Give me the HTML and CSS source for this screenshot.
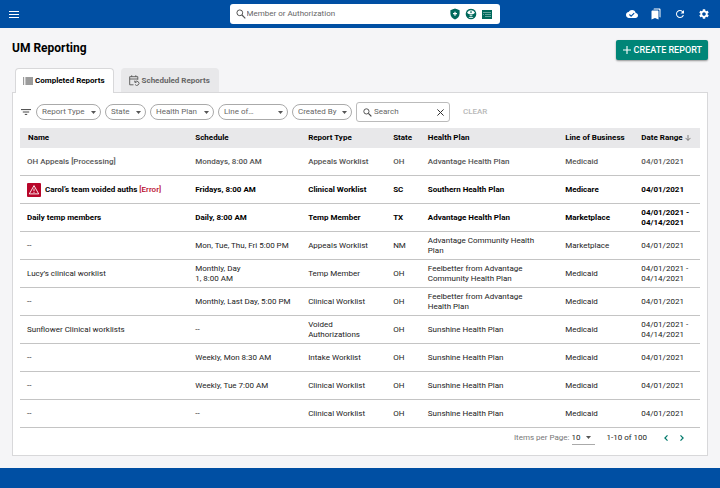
FILE: index.html
```html
<!DOCTYPE html>
<html lang="en">
<head>
<meta charset="utf-8">
<meta name="viewport" content="width=device-width, initial-scale=1">
<title>UM Reporting</title>
<link rel="stylesheet" href="styles.css">
</head>
<body>
<header class="topbar">
  <button class="icon-btn" type="button" aria-label="Menu">
    <svg width="10" height="8" viewBox="0 0 10 8"><path d="M0 1.500h10M0 4.500h10M0 7.500h10" stroke="#fff"/></svg>
  </button>
  <form class="global-search" role="search">
    <svg width="10" height="10" viewBox="0 0 10 10" fill="none" stroke="#555"><circle cx="3.8" cy="3.8" r="2.9"/><path d="M6 6l3.3 3.3" stroke-width="1.2"/></svg>
    <input type="search" aria-label="Member or Authorization" placeholder="Member or Authorization">
    <button class="icon-btn" type="button" aria-label="Coverage">
      <svg width="10" height="12" viewBox="0 0 10 12"><path d="M5 .4l4.6 1.8v3.4c0 2.8-1.9 5-4.6 6C2.300 10.600.4 8.400.4 5.600V2.200z" fill="#00695c"/><path d="M5 3.700v4M3 5.700h4" stroke="#fff" stroke-width="1.2"/></svg>
    </button>
    <button class="icon-btn" type="button" aria-label="Provider">
      <svg width="12" height="12" viewBox="0 0 12 12"><circle cx="6" cy="6" r="5.300" fill="#00695c"/><path d="M2 4.700Q3.500 2.300 6 2.300t4 2.400L8.400 6H3.600z" fill="#fff"/><path d="M4.300 6.400a1.700 1.700 0 0 0 3.400 0zM3.600 9.900c.3-.9 1.200-1.200 2.400-1.200s2.100.3 2.400 1.200z" fill="#cfe5e2"/><path d="M6 3.100v2M5 4.100h2" stroke="#00695c" stroke-width=".7"/></svg>
    </button>
    <button class="icon-btn" type="button" aria-label="Member card">
      <svg width="10" height="9" viewBox="0 0 10 9"><path d="M0 0h10v9H0z" fill="#00695c"/><path d="M1 2.500h8M1 4.500h1M3 4.500h6M3 6.500h6" stroke="#7db5ad" stroke-width=".8"/></svg>
    </button>
  </form>
  <nav class="tools" aria-label="Tools">
    <button class="icon-btn" type="button" aria-label="Sync status">
      <svg width="12" height="8" viewBox="0 0 24 16"><path d="M19.350 6.040A7.490 7.490 0 0 0 12 0C9.110 0 6.600 1.640 5.350 4.040A5.994 5.994 0 0 0 0 10c0 3.310 2.690 6 6 6h13c2.760 0 5-2.240 5-5 0-2.640-2.050-4.780-4.650-4.960z" fill="#fff"/><path d="M6.800 9l3.400 3.400 6.200-6.200" fill="none" stroke="#004fa3" stroke-width="2.200"/></svg>
    </button>
    <button class="icon-btn" type="button" aria-label="Bookmarks">
      <svg width="12" height="12" viewBox="0 0 24 24" fill="#fff"><path d="M19 18l2 1V3c0-1.100-.9-2-2-2H8.990C7.890 1 7 1.900 7 3h10c1.100 0 2 .9 2 2v13zM15 5H5c-1.100 0-2 .9-2 2v16l7-3 7 3V7c0-1.100-.9-2-2-2z"/></svg>
    </button>
    <button class="icon-btn" type="button" aria-label="Refresh">
      <svg width="12" height="12" viewBox="0 0 24 24" fill="#fff"><path d="M17.650 6.350A7.958 7.958 0 0 0 12 4c-4.420 0-7.990 3.580-7.990 8s3.570 8 7.990 8c3.730 0 6.840-2.550 7.730-6h-2.080A5.990 5.990 0 0 1 12 18c-3.310 0-6-2.690-6-6s2.690-6 6-6c1.660 0 3.140.69 4.220 1.780L13 11h7V4l-2.350 2.350z"/></svg>
    </button>
    <button class="icon-btn" type="button" aria-label="Settings">
      <svg width="12" height="12" viewBox="0 0 24 24" fill="#fff"><path d="M19.140 12.940c.04-.3.060-.61.060-.94 0-.32-.02-.64-.07-.94l2.030-1.580c.18-.14.23-.41.12-.61l-1.920-3.320c-.12-.22-.37-.29-.59-.22l-2.390.96c-.5-.38-1.030-.7-1.620-.94l-.36-2.540c-.04-.24-.24-.41-.48-.41h-3.840c-.24 0-.43.17-.47.41l-.36 2.540c-.59.24-1.130.57-1.620.94l-2.390-.96c-.22-.08-.47 0-.59.22L2.740 8.870c-.12.21-.08.47.12.61l2.030 1.580c-.05.3-.09.63-.09.94s.02.64.07.94l-2.030 1.580c-.18.14-.23.41-.12.61l1.920 3.320c.12.22.37.29.59.22l2.390-.96c.5.38 1.030.7 1.620.94l.36 2.540c.05.24.24.41.48.41h3.840c.24 0 .44-.17.47-.41l.36-2.540c.59-.24 1.130-.56 1.620-.94l2.390.96c.22.08.47 0 .59-.22l1.920-3.320c.12-.22.07-.47-.12-.61l-2.010-1.580zM12 15.600c-1.980 0-3.600-1.620-3.600-3.600s1.620-3.600 3.600-3.600 3.600 1.620 3.600 3.600-1.620 3.600-3.600 3.600z"/></svg>
    </button>
  </nav>
</header>

<main class="page">
  <div class="page-head">
    <h1>UM Reporting</h1>
    <button class="create" type="button">
      <svg width="8" height="8" viewBox="0 0 8 8"><path d="M4 0v8M0 4h8" stroke="#fff" stroke-width="1.100"/></svg>
      CREATE REPORT
    </button>
  </div>

  <div class="tabs" role="tablist">
    <button class="tab tab-active" type="button" role="tab" aria-selected="true">
      <svg width="10" height="8" viewBox="0 0 10 8" stroke="#222" stroke-width=".9"><path d="M0 1h1.200M0 3h1.200M0 5h1.200M0 7h1.200M2.400 1H10M2.400 3H10M2.400 5H10M2.400 7H10"/></svg>
      Completed Reports
    </button>
    <button class="tab" type="button" role="tab" aria-selected="false">
      <svg width="11" height="11" viewBox="0 0 11 11" fill="none" stroke="#555" stroke-width=".9"><path d="M4.500 9.800H.7V1.700h8.100v3M.7 4h8.100M2.700.3v1.500M6.800.3v1.500M6.200 7a2.100 2.100 0 1 1-.1 2.500M5.800 5.600v1.700h1.700"/></svg>
      Scheduled Reports
    </button>
  </div>

  <section class="panel">
    <form class="filters">
      <svg width="10" height="6" viewBox="0 0 10 6"><path d="M0 .6h10M1.800 3h6.400M3.800 5.400h2.400" stroke="#444"/></svg>
      <select class="pill pill-type" aria-label="Report Type"><option>Report Type</option></select>
      <select class="pill pill-state" aria-label="State"><option>State</option></select>
      <select class="pill pill-plan" aria-label="Health Plan"><option>Health Plan</option></select>
      <select class="pill pill-line" aria-label="Line of Business"><option>Line of…</option></select>
      <select class="pill pill-by" aria-label="Created By"><option>Created By</option></select>
      <div class="table-search">
        <svg width="9" height="9" viewBox="0 0 10 10" fill="none" stroke="#444"><circle cx="3.800" cy="3.800" r="2.900"/><path d="M6 6l3.300 3.300" stroke-width="1.300"/></svg>
        <input type="search" aria-label="Search" placeholder="Search">
        <button class="icon-btn" type="button" aria-label="Clear search">
          <svg width="7" height="7" viewBox="0 0 7 7"><path d="M.4.4l6.200 6.200M6.600.4L.4 6.600" stroke="#333"/></svg>
        </button>
      </div>
      <button class="clear" type="reset">CLEAR</button>
    </form>

    <table class="reports">
      <colgroup><col class="c-name"><col class="c-sched"><col class="c-type"><col class="c-state"><col class="c-plan"><col class="c-line"><col class="c-date"></colgroup>
      <thead>
        <tr><th>Name</th><th>Schedule</th><th>Report Type</th><th>State</th><th>Health Plan</th><th>Line of Business</th><th>Date Range <svg class="sort" width="6" height="6" viewBox="0 0 6 6"><path d="M3 0v5.300M.5 2.900L3 5.400l2.500-2.500" fill="none" stroke="#666" stroke-width=".8"/></svg></th></tr>
      </thead>
      <tbody>
        <tr class="processing"><td>OH Appeals [Processing]</td><td>Mondays, 8:00 AM</td><td>Appeals Worklist</td><td>OH</td><td>Advantage Health Plan</td><td>Medicaid</td><td>04/01/2021</td></tr>
        <tr class="unread"><td><span class="failed"><svg width="14" height="14" viewBox="0 0 14 14"><rect width="14" height="14" rx="1" fill="#b8062a"/><path d="M7 2.600l4.700 8.300H2.300z" fill="none" stroke="#fff" stroke-width=".9"/><path d="M7 5.500v2.700M7 8.900v1" stroke="#fff" stroke-width=".9"/></svg><span>Carol’s team voided auths <em>[Error]</em></span></span></td><td>Fridays, 8:00 AM</td><td>Clinical Worklist</td><td>SC</td><td>Southern Health Plan</td><td>Medicare</td><td>04/01/2021</td></tr>
        <tr class="unread"><td>Daily temp members</td><td>Daily, 8:00 AM</td><td>Temp Member</td><td>TX</td><td>Advantage Health Plan</td><td>Marketplace</td><td>04/01/2021 - 04/14/2021</td></tr>
        <tr><td>--</td><td>Mon, Tue, Thu, Fri 5:00 PM</td><td>Appeals Worklist</td><td>NM</td><td>Advantage Community Health Plan</td><td>Marketplace</td><td>04/01/2021</td></tr>
        <tr><td>Lucy’s clinical worklist</td><td>Monthly, Day<br>1, 8:00 AM</td><td>Temp Member</td><td>OH</td><td>Feelbetter from Advantage Community Health Plan</td><td>Medicaid</td><td>04/01/2021 - 04/14/2021</td></tr>
        <tr><td>--</td><td>Monthly, Last Day, 5:00 PM</td><td>Clinical Worklist</td><td>OH</td><td>Feelbetter from Advantage Health Plan</td><td>Medicaid</td><td>04/01/2021</td></tr>
        <tr><td>Sunflower Clinical worklists</td><td>--</td><td>Voided Authorizations</td><td>OH</td><td>Sunshine Health Plan</td><td>Medicaid</td><td>04/01/2021 - 04/14/2021</td></tr>
        <tr><td>--</td><td>Weekly, Mon 8:30 AM</td><td>Intake Worklist</td><td>OH</td><td>Sunshine Health Plan</td><td>Medicaid</td><td>04/01/2021</td></tr>
        <tr><td>--</td><td>Weekly, Tue 7:00 AM</td><td>Clinical Worklist</td><td>OH</td><td>Sunshine Health Plan</td><td>Medicaid</td><td>04/01/2021</td></tr>
        <tr><td>--</td><td>--</td><td>Clinical Worklist</td><td>OH</td><td>Sunshine Health Plan</td><td>Medicaid</td><td>04/01/2021</td></tr>
      </tbody>
    </table>

    <div class="pager">
      <label for="per-page">Items per Page:</label>
      <select id="per-page" class="per-page"><option>10</option></select>
      <span class="range">1-10 of 100</span>
      <button class="icon-btn" type="button" aria-label="Previous page"><svg width="4" height="6" viewBox="0 0 4 6"><path d="M3.500.4L.9 3l2.600 2.600" fill="none" stroke="#00796b" stroke-width="1.200"/></svg></button>
      <button class="icon-btn" type="button" aria-label="Next page"><svg width="4" height="6" viewBox="0 0 4 6"><path d="M.5.4L3.100 3 .5 5.600" fill="none" stroke="#00796b" stroke-width="1.200"/></svg></button>
    </div>
  </section>
</main>
<footer class="footer"></footer>
</body>
</html>
```
FILE: styles.css
```css
* { box-sizing: border-box; }

body {
  margin: 0;
  min-height: 100vh;
  display: flex;
  flex-direction: column;
  background: #f5f5f7;
  color: #222;
  font: 8px/10px Roboto, "Liberation Sans", sans-serif;
}

button, input, select { font: inherit; color: inherit; margin: 0; }
svg { display: block; flex: none; }

.icon-btn {
  display: flex;
  padding: 0;
  border: 0;
  background: none;
}

.topbar {
  display: grid;
  grid-template-columns: 1fr 270px 1fr;
  align-items: center;
  height: 28px;
  padding-left: 9px;
  background: #004fa3;
}

.global-search {
  display: flex;
  align-items: center;
  gap: 5px;
  height: 20px;
  margin: 0;
  padding: 0 8px 0 6px;
  background: #fff;
  border-radius: 3px;
}

.global-search input, .table-search input {
  flex: 1;
  min-width: 0;
  padding: 0;
  border: 0;
  background: none;
  outline: 0;
}

.global-search input { margin-left: -4px; }
input::placeholder { color: #666; opacity: 1; }

.tools {
  display: flex;
  justify-content: flex-end;
  align-items: center;
  gap: 12px;
  padding-right: 10px;
}

.page { flex: 1; padding: 12px; }

.page-head {
  display: flex;
  justify-content: space-between;
  height: 28px;
}

h1 {
  margin: 0;
  color: #000;
  font-size: 12px;
  line-height: 16px;
  font-weight: 700;
}

.create {
  display: flex;
  align-items: center;
  gap: 3px;
  height: 20px;
  padding: 0 6px 0 7px;
  border: 0;
  border-radius: 2px;
  background: #008577;
  box-shadow: 0 1px 2px rgba(0, 0, 0, .4);
  color: #fff;
  font-size: 9px;
  font-weight: 500;
}

.tabs { display: flex; gap: 7px; padding: 0 3px; }

.tab {
  display: flex;
  align-items: center;
  gap: 2px;
  height: 24px;
  padding: 0 8px 0 7px;
  border: 1px solid #e8e8ea;
  border-bottom: 0;
  border-radius: 4px 4px 0 0;
  background: #e8e8ea;
  color: #666;
  font-weight: 700;
}

.tab-active {
  position: relative;
  height: 25px;
  margin-bottom: -1px;
  border-color: #d8d8da;
  background: #fff;
  color: #000;
}

.panel {
  padding: 9px 7px;
  border: 1px solid #d8d8da;
  background: #fff;
}

.filters {
  display: flex;
  align-items: center;
  gap: 4px;
  margin: 0 0 6px;
  padding-left: 1px;
}

.filters > svg { margin-right: 1px; }

.pill, .per-page {
  appearance: none;
  border: 1px solid #aaa;
  outline: 0;
  background: url("data:image/svg+xml,%3Csvg xmlns='http://www.w3.org/2000/svg' width='5' height='3'%3E%3Cpath d='M0 0h5L2.500 3z' fill='%23555'/%3E%3C/svg%3E") no-repeat right 4px center;
}

.pill {
  height: 16px;
  padding: 0 10px 0 5px;
  border-radius: 8px;
  color: #666;
}

.pill-type { width: 65px; }
.pill-state { width: 41px; }
.pill-plan { width: 64px; }
.pill-line { width: 70px; }
.pill-by { width: 60px; }

.table-search {
  display: flex;
  align-items: center;
  gap: 2px;
  width: 94px;
  height: 20px;
  padding: 0 5px 0 6px;
  border: 1px solid #bbb;
  border-radius: 3px;
}

.clear {
  margin-left: 9px;
  padding: 0;
  border: 0;
  background: none;
  color: #b8b8b8;
  font-weight: 500;
}

.reports {
  width: 100%;
  table-layout: fixed;
  border-collapse: separate;
  border-spacing: 0;
}

.c-name { width: 24.600%; }
.c-sched { width: 16.600%; }
.c-type { width: 12.500%; }
.c-state { width: 5.100%; }
.c-plan { width: 20.200%; }
.c-line { width: 11.200%; }
.c-date { width: 9.800%; }

th, td {
  padding: 0 0 0 8px;
  text-align: left;
  vertical-align: middle;
}

th {
  height: 20px;
  background: #e8e8ea;
  color: #000;
  font-weight: 700;
  white-space: nowrap;
}

td {
  height: 28px;
  border-bottom: 1px solid #c4c4c4;
}

td:first-child { padding-left: 7px; }
td:nth-child(5) { padding-right: 16px; }

.sort { display: inline-block; vertical-align: -1px; }
.processing { color: #555; font-weight: 500; }
.unread { color: #000; font-weight: 700; }
.failed { display: flex; align-items: center; gap: 4px; }
.failed em { color: #b8062a; font-style: normal; font-weight: 500; }

.pager {
  display: flex;
  justify-content: flex-end;
  align-items: center;
  height: 16px;
  margin-top: 2px;
  padding-right: 16px;
  color: #777;
}

.per-page {
  width: 23px;
  height: 14px;
  margin: 0 12px 0 2px;
  padding: 0;
  border-width: 0 0 1px;
  color: #222;
}

.range { margin-right: 17px; color: #222; }
.pager .icon-btn + .icon-btn { margin-left: 12px; }

.footer { height: 20px; background: #004fa3; }
```
